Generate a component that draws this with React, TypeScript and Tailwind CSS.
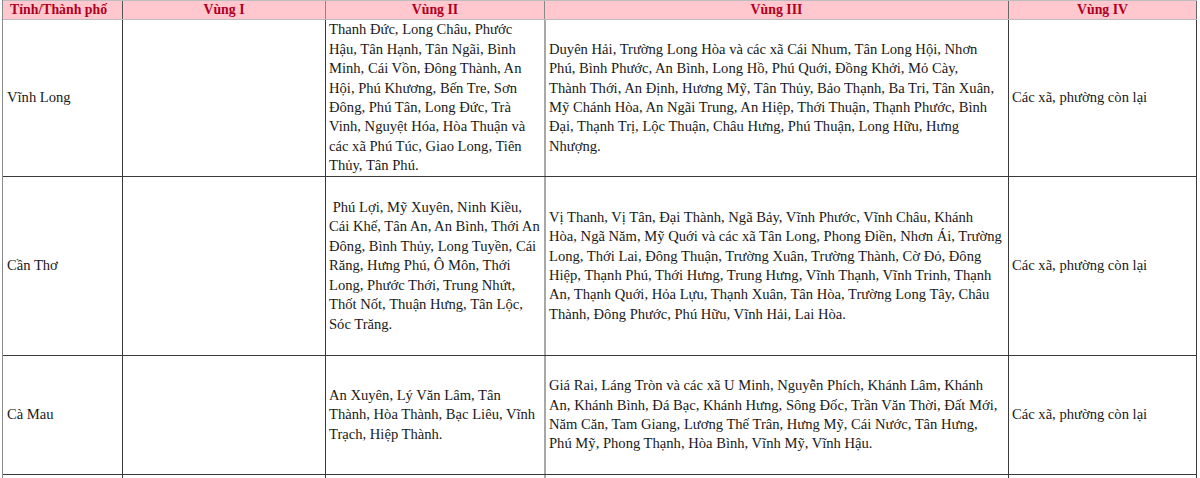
const rows: {
  name: string;
  h: string;
  v2: string[];
  v3: string[];
}[] = [
  {
    name: "Vĩnh Long",
    h: "h-[157px]",
    v2: [
      "Thanh Đức, Long Châu, Phước",
      "Hậu, Tân Hạnh, Tân Ngãi, Bình",
      "Minh, Cái Vồn, Đông Thành, An",
      "Hội, Phú Khương, Bến Tre, Sơn",
      "Đông, Phú Tân, Long Đức, Trà",
      "Vinh, Nguyệt Hóa, Hòa Thuận và",
      "các xã Phú Túc, Giao Long, Tiên",
      "Thủy, Tân Phú.",
    ],
    v3: [
      "Duyên Hải, Trường Long Hòa và các xã Cái Nhum, Tân Long Hội, Nhơn",
      "Phú, Bình Phước, An Bình, Long Hồ, Phú Quới, Đồng Khởi, Mỏ Cày,",
      "Thành Thới, An Định, Hương Mỹ, Tân Thủy, Bảo Thạnh, Ba Tri, Tân Xuân,",
      "Mỹ Chánh Hòa, An Ngãi Trung, An Hiệp, Thới Thuận, Thạnh Phước, Bình",
      "Đại, Thạnh Trị, Lộc Thuận, Châu Hưng, Phú Thuận, Long Hữu, Hưng",
      "Nhượng.",
    ],
  },
  {
    name: "Cần Thơ",
    h: "h-[179px]",
    v2: [
      "\u00a0Phú Lợi, Mỹ Xuyên, Ninh Kiều,",
      "Cái Khế, Tân An, An Bình, Thới An",
      "Đông, Bình Thủy, Long Tuyền, Cái",
      "Răng, Hưng Phú, Ô Môn, Thới",
      "Long, Phước Thới, Trung Nhứt,",
      "Thốt Nốt, Thuận Hưng, Tân Lộc,",
      "Sóc Trăng.",
    ],
    v3: [
      "Vị Thanh, Vị Tân, Đại Thành, Ngã Bảy, Vĩnh Phước, Vĩnh Châu, Khánh",
      "Hòa, Ngã Năm, Mỹ Quới và các xã Tân Long, Phong Điền, Nhơn Ái, Trường",
      "Long, Thới Lai, Đông Thuận, Trường Xuân, Trường Thành, Cờ Đỏ, Đông",
      "Hiệp, Thạnh Phú, Thới Hưng, Trung Hưng, Vĩnh Thạnh, Vĩnh Trinh, Thạnh",
      "An, Thạnh Quới, Hỏa Lựu, Thạnh Xuân, Tân Hòa, Trường Long Tây, Châu",
      "Thành, Đông Phước, Phú Hữu, Vĩnh Hải, Lai Hòa.",
    ],
  },
  {
    name: "Cà Mau",
    h: "h-[119px]",
    v2: [
      "An Xuyên, Lý Văn Lâm, Tân",
      "Thành, Hòa Thành, Bạc Liêu, Vĩnh",
      "Trạch, Hiệp Thành.",
    ],
    v3: [
      "Giá Rai, Láng Tròn và các xã U Minh, Nguyễn Phích, Khánh Lâm, Khánh",
      "An, Khánh Bình, Đá Bạc, Khánh Hưng, Sông Đốc, Trần Văn Thời, Đất Mới,",
      "Năm Căn, Tam Giang, Lương Thế Trân, Hưng Mỹ, Cái Nước, Tân Hưng,",
      "Phú Mỹ, Phong Thạnh, Hòa Bình, Vĩnh Mỹ, Vĩnh Hậu.",
    ],
  },
];

const cols = "grid grid-cols-[119px_203px_219px_464px_189px]";

function Lines({ lines }: { lines: string[] }) {
  return (
    <div>
      {lines.map((l, i) => (
        <div key={i} className="whitespace-pre">
          {l}
        </div>
      ))}
    </div>
  );
}

export default function App() {
  return (
    <div className="h-[478px] w-[1200px] overflow-hidden bg-white pl-[2px] font-['Liberation_Serif','Times_New_Roman',serif] text-[14.6px] leading-[19.4px] text-[#1a1a1a]">
      <div className="w-[1195px] border-l border-[#8a8a8a]">
        {/* header */}
        <div
          className={`${cols} h-[20px] border-t border-b border-[#bdbdbd] bg-[#ffc7ce] text-[13.8px] leading-[18px] font-bold text-[#b0001e]`}
        >
          <div className="flex items-center pl-[7px]">Tỉnh/Thành phố</div>
          <div className="flex items-center justify-center border-l border-[#555]">Vùng I</div>
          <div className="flex items-center justify-center border-l border-[#888]">Vùng II</div>
          <div className="flex items-center justify-center border-l border-[#888]">Vùng III</div>
          <div className="flex items-center justify-center border-l border-r border-[#666]">
            Vùng IV
          </div>
        </div>

        {rows.map((r) => (
          <div key={r.name} className={`${cols} ${r.h} border-b border-[#3a3a3a]`}>
            <div className="flex items-center pl-[4px]">{r.name}</div>
            <div className="border-l border-[#3a3a3a]" />
            <div className="flex items-center border-l border-[#3a3a3a] pl-[3px]">
              <Lines lines={r.v2} />
            </div>
            <div className="flex items-center border-l-2 border-[#a8a8a8] pl-[3px]">
              <Lines lines={r.v3} />
            </div>
            <div className="flex items-center border-l border-r border-[#3a3a3a] pl-[3px]">
              Các xã, phường còn lại
            </div>
          </div>
        ))}

        <div className={`${cols} h-[20px]`}>
          <div />
          <div className="border-l border-[#3a3a3a]" />
          <div className="border-l border-[#3a3a3a]" />
          <div className="border-l-2 border-[#a8a8a8]" />
          <div className="border-l border-r border-[#3a3a3a]" />
        </div>
      </div>
    </div>
  );
}
